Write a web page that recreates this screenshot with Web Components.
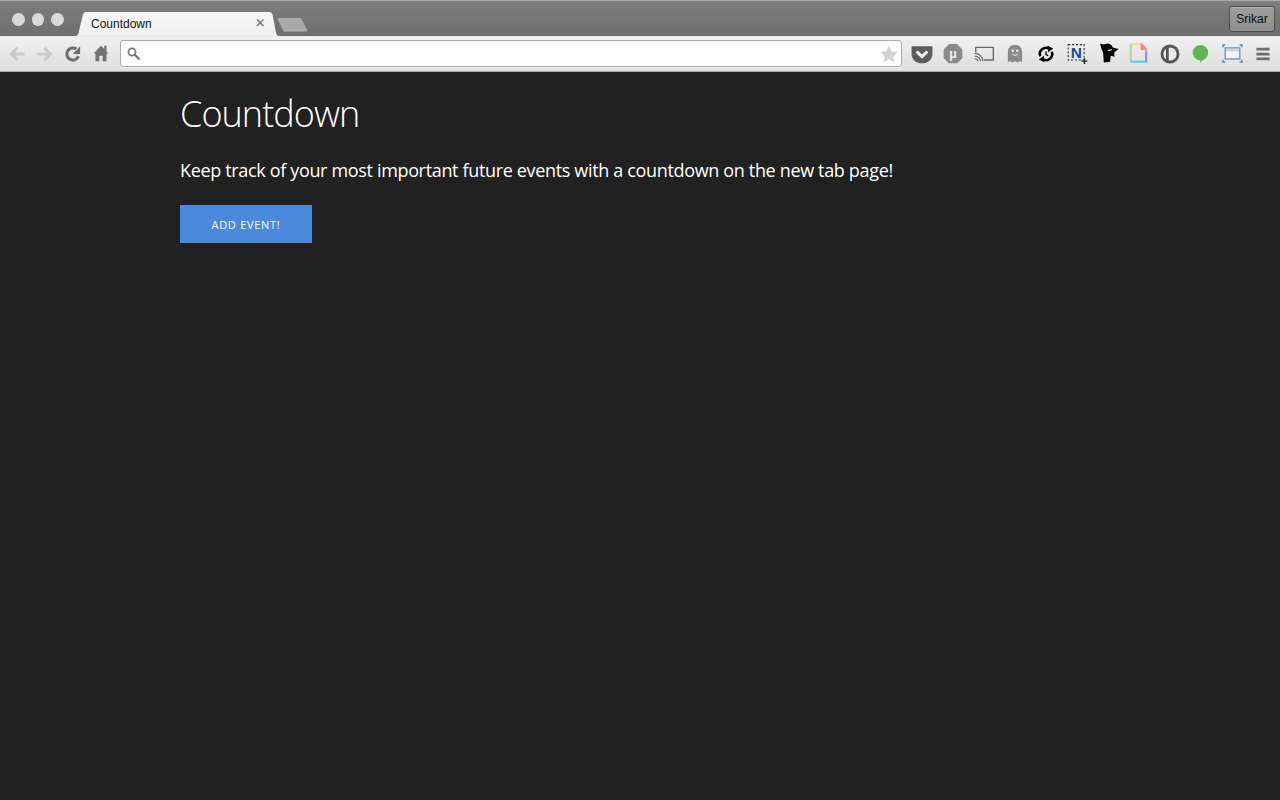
<!DOCTYPE html>
<html>
<head>
<meta charset="utf-8">
<title>Countdown</title>
<style>
    html, body { margin: 0; height: 100%; background: #212121; }
    body { display: flex; flex-direction: column; overflow: hidden; }
</style>
</head>
<body>
<browser-frame>
    <tab-strip slot="tabs" title-text="Countdown" profile="Srikar"></tab-strip>
    <nav-bar slot="nav"></nav-bar>
</browser-frame>
<countdown-page>
    <span slot="title">Countdown</span>
    <span slot="lead">Keep track of your most important future events with a countdown on the new tab page!</span>
    <add-button>ADD EVENT!</add-button>
</countdown-page>

<script>
class BrowserFrame extends HTMLElement {
    constructor() {
        super();
        this.attachShadow({mode: 'open'}).innerHTML = `
        <style>
            :host { display: block; flex: none; }
        </style>
        <slot name="tabs"></slot>
        <slot name="nav"></slot>`;
    }
}

class TabStrip extends HTMLElement {
    constructor() {
        super();
        this.attachShadow({mode: 'open'});
    }

    connectedCallback() {
        const title = this.getAttribute('title-text');
        const profile = this.getAttribute('profile');
        this.shadowRoot.innerHTML = `
        <style>
            :host { display: flex; height: 36px; box-sizing: border-box; position: relative;
                background: linear-gradient(#828282 0, #7c7c7c 3px, #6e6e6e 100%);
                border-top: 1px solid #a8a8a8; }
            .lights { display: flex; gap: 7px; padding: 12px 0 0 12px; width: 64px; flex: none; box-sizing: border-box; }
            .lights i { width: 13px; height: 13px; border-radius: 50%; background: #d9d9d9; }
            .tab { position: relative; flex: none; width: 204px; height: 24px; margin: 11px 0 0 11px; display: flex; align-items: center; }
            .tab svg { position: absolute; inset: 0; }
            .tab span { position: relative; margin-left: 16px; font: 12px "Liberation Sans", Arial, sans-serif; color: #111; }
            .tab b { position: absolute; left: 179px; top: 4px; width: 14px; height: 14px; }
            .new { flex: none; margin: 16px 0 0 -3px; }
            .profile { margin: 5px 5px 0 auto; height: 26px; width: 46px; box-sizing: border-box; border: 1px solid #4e4e4e; border-radius: 3px;
                background: linear-gradient(#9e9e9e, #8e8e8e); box-shadow: inset 0 1px 0 #b4b4b4;
                font: 12px/24px "Liberation Sans", Arial, sans-serif; color: #111; text-align: center; }
        </style>
        <div class="lights"><i></i><i></i><i></i></div>
        <div class="tab">
            <svg width="204" height="24" viewBox="0 0 204 24"><path d="M0 24C2 24 3 23 3.500 21L8 2.500C8.500 1 9.500 0 11 0H194C196 0 197 1 197.500 2.500L201 21C201.500 23 202.500 24 204 24Z" fill="url(#g)"/><defs><linearGradient id="g" x1="0" y1="0" x2="0" y2="1"><stop offset="0" stop-color="#f7f7f7"/><stop offset="1" stop-color="#f0f0f0"/></linearGradient></defs></svg>
            <span>${title}</span>
            <b><svg width="14" height="14" viewBox="0 0 14 14"><path d="M3 3.500L9.500 10M9.500 3.500L3 10" stroke="#777" stroke-width="1.500" fill="none"/></svg></b>
        </div>
        <svg class="new" width="34" height="16" viewBox="0 0 34 16"><path d="M1.500 2.500C1.300 1.300 2 .5 3 .5H24C25 .5 25.500 1 26 2L31.500 13C32 14.300 31.500 15 30.500 15H9C8 15 7.300 14.500 6.800 13.500Z" fill="#aaaaaa" stroke="#707070" stroke-width=".7"/></svg>
        <div class="profile">${profile}</div>`;
    }
}

// toolbar icons, viewBox 20 drawn at 22px
const ICONS = {
    pocket: `<path d="M1.500 3H18.500C19.200 3 19.500 3.500 19.500 4.200V10C19.500 15.500 15 18.500 10 18.500S.5 15.500 .5 10V4.200C.5 3.500 .8 3 1.500 3Z" fill="#5c5c5c"/><path d="M6 8.500L10 12.300L14 8.500" fill="none" stroke="#eee" stroke-width="2.800" stroke-linecap="round" stroke-linejoin="round"/>`,
    utorrent: `<path d="M6.500 1.500H13.500L18 6V13.500L13.500 18H6.500L2 13.500V6Z" fill="#8a8a8a" stroke="#8a8a8a" stroke-linejoin="round"/><text x="10" y="14" text-anchor="middle" font-family="Liberation Sans" font-weight="700" font-size="12" fill="#eee">µ</text>`,
    cast: `<path d="M2.500 8.500V4H18.500V15.500H10" fill="none" stroke="#6a6a6a" stroke-width="1.300"/><path d="M1.500 9.500C5.500 9.500 9 12.500 9 16.500M1.500 12C4.500 12 6.800 14 6.800 16.500M1.500 14.300C3 14.300 4.500 15 4.500 16.500" fill="none" stroke="#6a6a6a" stroke-width="1.100"/>`,
    ghost: `<path d="M3.500 17.500V8C3.500 4 6.500 1.500 10 1.500S16.500 4 16.500 8V17.500L14.500 16.500L12.500 17.800L10 16.500L7.500 17.800L5.500 16.500Z" fill="#8a8a8a"/><circle cx="8" cy="7" r="1.100" fill="#eee"/><circle cx="12" cy="7" r="1.100" fill="#eee"/><path d="M7.500 10C8.500 11.500 11.500 11.500 12.500 10" fill="none" stroke="#eee" stroke-width=".9"/>`,
    sync: `<path d="M4.800 12A5.500 5.500 0 0 1 13 5.400M15.200 8A5.500 5.500 0 0 1 7 14.600" fill="none" stroke="#000" stroke-width="2.300"/><path d="M11.500 2.500L16.500 5L12 8.500ZM8.500 17.500L3.500 15L8 11.500Z" fill="#000"/><path d="M10 7.500V10.500L12 11.500" fill="none" stroke="#000" stroke-width="1.200"/>`,
    notion: `<rect x="2" y="1.500" width="14.500" height="14" fill="none" stroke="#333" stroke-width="1" stroke-dasharray="2 1.500"/><text x="9.300" y="13.500" text-anchor="middle" font-family="Liberation Sans" font-weight="700" font-size="14" fill="#1b4a92">N</text><path d="M14 16.500H19.500M16.800 13.800V19.200" stroke="#222" stroke-width="1.300"/>`,
    ninja: `<circle cx="9.500" cy="5.500" r="5" fill="#000"/><path d="M5.500 8H15.500L16 12.500L12.400 11.500L12 17L6.200 17.800Z" fill="#000"/><path d="M2.800 .6L8 1.500L4.600 7ZM12 3.500L19.600 5.500L14.500 9.500Z" fill="#000"/><path d="M10 6.700L13.800 6.200" stroke="#eee" stroke-width="1"/>`,
    page: `<path d="M2.500 1H12" stroke="#f1e08c" stroke-width="2" fill="none"/><path d="M2.500 1V17" stroke="#a8dc9c" stroke-width="2" fill="none"/><path d="M2 17H17.500" stroke="#63cdf0" stroke-width="2" fill="none"/><path d="M16.500 7V17" stroke="#9b88d8" stroke-width="2" fill="none"/><path d="M11.500 0H12.500L17.500 5.500V6.500H13C12 6.500 11.500 6 11.500 5Z" fill="#f08a85"/>`,
    instapaper: `<circle cx="10" cy="10" r="8.600" fill="#555"/><circle cx="10" cy="10" r="6" fill="#eaeaea"/><path d="M7.600 3V17" stroke="#555" stroke-width="2.500"/>`,
    hangouts: `<path d="M9.500 1.800A7 7 0 0 1 16.500 8.800C16.500 12.500 13.500 14.800 11.500 16C10.500 16.600 9.700 17.500 9.300 18.800V15.800A7 7 0 0 1 9.500 1.800Z" fill="#66b45a"/>`,
    capture: `<path d="M1.800 3.800V1.800H3.800M17 1.800H19V3.800M1.800 15.300V17.300H3.800M17 17.300H19V15.300" fill="none" stroke="#4f8fb8" stroke-width="1.300"/><rect x="3.800" y="4.500" width="13.300" height="10" fill="#f4f4f4" stroke="#5b97c1" stroke-width="1.200"/><rect x="4.400" y="5.100" width="12.100" height="2.300" fill="#c9d4dc"/>`,
    menu: `<path d="M4 5.500H16M4 10H16M4 14.500H16" stroke="#6e6e6e" stroke-width="2.500"/>`
};

const ARROW_BACK = `<path d="M17 10H5.500M10.500 4.500L5 10L10.500 15.500" fill="none" stroke="#cbcbcb" stroke-width="2.800"/>`;
const ARROW_FORWARD = `<path d="M3 10H14.500M9.500 4.500L15 10L9.500 15.500" fill="none" stroke="#cbcbcb" stroke-width="2.800"/>`;
const RELOAD = `<path d="M15 12A5.500 5.500 0 1 1 13 5.500" fill="none" stroke="#6e6e6e" stroke-width="2.800"/><path d="M16.500 3V10H9.800Z" fill="#6e6e6e"/>`;
const HOME = `<path d="M10 2.500L3.300 9.500H5V16.500H8.500V11.500H11.500V16.500H15V9.500H16.700L15 7.700V2.500H13V5.500Z" fill="#727272"/>`;

class NavBar extends HTMLElement {
    constructor() {
        super();
        this.attachShadow({mode: 'open'});
    }

    icon(body) {
        return `<svg width="22" height="22" viewBox="0 0 20 20">${body}</svg>`;
    }

    connectedCallback() {
        const exts = Object.keys(ICONS).map(k => `<span class="ext">${this.icon(ICONS[k])}</span>`).join('');
        this.shadowRoot.innerHTML = `
        <style>
            :host { display: flex; align-items: center; height: 36px; box-sizing: border-box;
                background: linear-gradient(#f0f0f0, #dedede); border-top: 1px solid #e8e8e8; border-bottom: 1px solid #aaa; }
            .nav { display: flex; gap: 6px; padding-left: 6px; flex: none; width: 120px; box-sizing: border-box; }
            .omni { flex: none; width: 782px; height: 27px; margin-bottom: 1px; box-sizing: border-box; background: #fff; border: 1px solid #a9a9a9;
                border-radius: 3px; display: flex; align-items: center; justify-content: space-between; padding: 0 2px 0 5px; box-shadow: 0 1px 0 #f5f5f5; }
            .exts { display: flex; margin-left: 4px; }
            .ext { width: 31px; display: flex; justify-content: center; }
            svg { display: block; }
        </style>
        <div class="nav">${this.icon(ARROW_BACK)}${this.icon(ARROW_FORWARD)}${this.icon(RELOAD)}${this.icon(HOME)}</div>
        <div class="omni">
            <svg width="16" height="16" viewBox="0 0 16 16"><circle cx="6" cy="6" r="3.600" fill="none" stroke="#777" stroke-width="1.700"/><path d="M8.800 8.800L13.500 13.500" stroke="#777" stroke-width="2.200"/></svg>
            <svg width="20" height="20" viewBox="0 0 20 20"><path d="M10 1.500L12.600 7.300L18.800 8L14.200 12.200L15.500 18.500L10 15.300L4.500 18.500L5.800 12.200L1.200 8L7.400 7.300Z" fill="#d2d2d2"/></svg>
        </div>
        <div class="exts">${exts}</div>`;
    }
}

class CountdownPage extends HTMLElement {
    constructor() {
        super();
        this.attachShadow({mode: 'open'}).innerHTML = `
        <style>
            :host { display: block; flex: 1; background: #212121; color: #fff; padding: 16px 180px 0;
                font-family: "Open Sans", sans-serif; }
            h1 { margin: 0; font-size: 36px; font-weight: 300; line-height: 52px; letter-spacing: -0.95px; }
            p { margin: 17px 0 22px; font-size: 18px; line-height: 26px; letter-spacing: -0.34px; }
        </style>
        <h1><slot name="title"></slot></h1>
        <p><slot name="lead"></slot></p>
        <slot></slot>`;
    }
}

class AddButton extends HTMLElement {
    constructor() {
        super();
        this.attachShadow({mode: 'open'}).innerHTML = `
        <style>
            :host { display: block; width: 132px; height: 38px; background: #4a89dc; color: #fff; text-align: center;
                font: 400 11px/40px "Open Sans", sans-serif; letter-spacing: 0.72px; }
        </style>
        <slot></slot>`;
    }
}

customElements.define('browser-frame', BrowserFrame);
customElements.define('tab-strip', TabStrip);
customElements.define('nav-bar', NavBar);
customElements.define('countdown-page', CountdownPage);
customElements.define('add-button', AddButton);
</script>
</body>
</html>
